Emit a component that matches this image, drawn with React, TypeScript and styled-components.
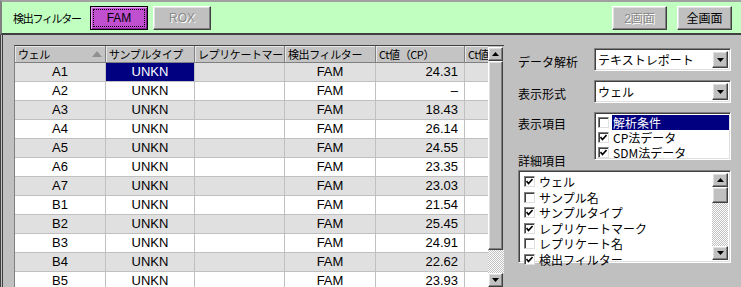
import React from 'react';
import styled, { createGlobalStyle, css } from 'styled-components';

const GlobalStyle = createGlobalStyle`
	html, body {
		margin: 0;
		padding: 0;
		background: #c0c0c0;
	}
	body {
		font-family: "Liberation Sans", "Noto Sans CJK JP", sans-serif;
		font-size: 12px;
		color: #000;
	}
`;

const rows = [
	['A1', '24.31'],
	['A2', '–'],
	['A3', '18.43'],
	['A4', '26.14'],
	['A5', '24.55'],
	['A6', '23.35'],
	['A7', '23.03'],
	['B1', '21.54'],
	['B2', '25.45'],
	['B3', '24.91'],
	['B4', '22.62'],
	['B5', '23.93'],
	['B6', '24.08'],
];

const headers = ['ウェル', 'サンプルタイプ', 'レプリケートマーク', '検出フィルター', 'Ct値（CP）', 'Ct値（SDM）'];

const displayItems = [
	{ label: '解析条件', checked: false, selected: true },
	{ label: 'CP法データ', checked: true },
	{ label: 'SDM法データ', checked: true },
];

const detailItems = [
	{ label: 'ウェル', checked: true },
	{ label: 'サンプル名', checked: false },
	{ label: 'サンプルタイプ', checked: true },
	{ label: 'レプリケートマーク', checked: true },
	{ label: 'レプリケート名', checked: false },
	{ label: '検出フィルター', checked: true },
];

const Arrow = ({ down }: { down?: boolean }) => (
	<svg width="7" height="4" viewBox="0 0 7 4">
		<polygon points={down ? '0,0 7,0 3.5,4' : '0,4 7,4 3.5,0'} fill="#000" />
	</svg>
);

const Check = () => (
	<svg width="7" height="7" viewBox="0 0 7 7">
		<polyline points="0.5,3 2.5,5.5 6.5,1" fill="none" stroke="#000" strokeWidth="1.6" />
	</svg>
);

export default function App() {
	return (
		<>
			<GlobalStyle />
			<Screen>
				<TopBar>
					<FilterLabel>検出フィルター</FilterLabel>
					<FilterButton active>
						<Focus>FAM</Focus>
					</FilterButton>
					<FilterButton disabled>ROX</FilterButton>
					<Spacer />
					<ViewButton disabled>2画面</ViewButton>
					<ViewButton>全画面</ViewButton>
				</TopBar>
				<Body>
					<TableArea>
						<TableClip>
							<Grid>
								{headers.map((h, i) => (
									<HeaderCell key={h}>
										{h}
										{i === 0 && <SortMark />}
									</HeaderCell>
								))}
								{rows.map(([well, ct], r) => (
									<React.Fragment key={well}>
										<Cell odd={r % 2 === 0}>{well}</Cell>
										<Cell odd={r % 2 === 0} selected={r === 0}>UNKN</Cell>
										<Cell odd={r % 2 === 0} />
										<Cell odd={r % 2 === 0}>FAM</Cell>
										<Cell odd={r % 2 === 0} right>{ct}</Cell>
										<Cell odd={r % 2 === 0} />
									</React.Fragment>
								))}
							</Grid>
						</TableClip>
						<VScroll>
							<ScrollBtn><Arrow /></ScrollBtn>
							<Thumb />
							<Track />
							<ScrollBtn><Arrow down /></ScrollBtn>
						</VScroll>
					</TableArea>
					<Side>
						<FieldRow>
							<FieldLabel>データ解析</FieldLabel>
							<Select>
								<SelectText>テキストレポート</SelectText>
								<DropBtn><Arrow down /></DropBtn>
							</Select>
						</FieldRow>
						<FieldRow>
							<FieldLabel>表示形式</FieldLabel>
							<Select>
								<SelectText>ウェル</SelectText>
								<DropBtn><Arrow down /></DropBtn>
							</Select>
						</FieldRow>
						<FieldRow top>
							<FieldLabel>表示項目</FieldLabel>
							<ListBox>
								{displayItems.map(it => (
									<ListItem key={it.label}>
										<Box>{it.checked && <Check />}</Box>
										<ItemText selected={it.selected}>{it.label}</ItemText>
									</ListItem>
								))}
							</ListBox>
						</FieldRow>
						<DetailLabel>詳細項目</DetailLabel>
						<DetailList>
							<DetailItems>
								{detailItems.map(it => (
									<ListItem key={it.label} tall>
										<Box>{it.checked && <Check />}</Box>
										<ItemText>{it.label}</ItemText>
									</ListItem>
								))}
							</DetailItems>
							<SmallScroll>
								<ScrollBtn small><Arrow /></ScrollBtn>
								<SmallThumb />
								<Track />
								<ScrollBtn small><Arrow down /></ScrollBtn>
							</SmallScroll>
						</DetailList>
					</Side>
				</Body>
			</Screen>
		</>
	);
}

const raised = css`
	border: 1px solid;
	border-color: #fff #404040 #404040 #fff;
	box-shadow: inset -1px -1px 0 #808080, inset 1px 1px 0 #dfdfdf;
`;

const sunken = css`
	border: 1px solid;
	border-color: #808080 #fff #fff #808080;
	box-shadow: inset 1px 1px 0 #404040, inset -1px -1px 0 #dfdfdf;
`;

const Screen = styled.div`
	width: 741px;
	height: 287px;
	overflow: hidden;
	background: #c0c0c0;
	display: flex;
	flex-direction: column;
`;

const TopBar = styled.div`
	height: 31px;
	flex: none;
	display: flex;
	align-items: center;
	gap: 5px;
	padding: 0 9px 0 11px;
	background: #c0ffc0;
	border-top: 2px solid #a0a0a0;
	border-left: 2px solid #808080;
	border-bottom: 2px solid #404040;
`;

const FilterLabel = styled.span`
	width: 72px;
	white-space: nowrap;
	font-family: "Noto Sans CJK JP", sans-serif;
	font-size: 11px;
	letter-spacing: -1.3px;
`;

const FilterButton = styled.div<{ active?: boolean; disabled?: boolean }>`
	width: 58px;
	height: 24px;
	box-sizing: border-box;
	display: flex;
	align-items: center;
	justify-content: center;
	${props =>
		props.active
			? css`
					background: #c050d0;
					border: 1px solid #000;
					box-shadow: inset 1px 1px 0 #e8a0f0, inset -1px -1px 0 #802090;
			  `
			: css`
					background: #c0c0c0;
					${raised};
			  `}
	color: ${props => (props.disabled ? '#8a8a8a' : '#000')};
	text-shadow: ${props => (props.disabled ? '1px 1px 0 #fff' : 'none')};
`;

const Focus = styled.span`
	display: flex;
	align-items: center;
	justify-content: center;
	width: 52px;
	height: 18px;
	box-sizing: border-box;
	border: 1px dotted #000;
`;

const Spacer = styled.div`
	flex: 1;
`;

const ViewButton = styled.div<{ disabled?: boolean }>`
	width: 55px;
	height: 24px;
	box-sizing: border-box;
	display: flex;
	align-items: center;
	justify-content: center;
	background: #c0c0c0;
	${raised};
	margin-left: 5px;
	color: ${props => (props.disabled ? '#8a8a8a' : '#000')};
	text-shadow: ${props => (props.disabled ? '1px 1px 0 #fff' : 'none')};
`;

const Body = styled.div`
	flex: 1;
	display: flex;
	border-left: 3px double #404040;
	min-height: 0;
`;

const TableArea = styled.div`
	display: flex;
	padding: 10px 0 0 11px;
	width: 490px;
	flex: none;
`;

const TableClip = styled.div`
	width: 474px;
	overflow: hidden;
	border-top: 1px solid #404040;
	border-left: 1px solid #808080;
`;

const Grid = styled.div`
	display: grid;
	grid-template-columns: 91px 89px 90px 91px 89px 80px;
	grid-auto-rows: 19px;
	grid-template-rows: 17px;
	width: 530px;
`;

const HeaderCell = styled.div`
	position: relative;
	background: #c4c4c4;
	border-right: 1px solid #808080;
	border-bottom: 1px solid #808080;
	box-shadow: inset 1px 1px 0 #e8e8e8;
	padding: 0 3px;
	line-height: 16px;
	white-space: nowrap;
	overflow: hidden;
	font-family: "Noto Sans CJK JP", sans-serif;
	font-size: 11px;
	letter-spacing: -0.4px;
`;

const SortMark = styled.span`
	position: absolute;
	right: 3px;
	top: 5px;
	width: 0;
	height: 0;
	border-left: 5px solid transparent;
	border-right: 5px solid transparent;
	border-bottom: 6px solid #909090;
`;

const Cell = styled.div<{ odd?: boolean; selected?: boolean; right?: boolean }>`
	background: ${props => (props.selected ? '#000080' : props.odd ? '#e0e0e0' : '#fff')};
	color: ${props => (props.selected ? '#fff' : '#000')};
	border-right: 1px solid #c0c0c0;
	border-bottom: 1px solid #c0c0c0;
	text-align: ${props => (props.right ? 'right' : 'center')};
	padding: 0 ${props => (props.right ? '6px' : '0')} 0 0;
	line-height: 18px;
	font-size: 13px;
`;

const VScroll = styled.div`
	width: 16px;
	flex: none;
	display: flex;
	flex-direction: column;
	border-top: 1px solid #404040;
	background: #c0c0c0;
	padding-top: 1px;
`;

const ScrollBtn = styled.div<{ small?: boolean }>`
	width: ${props => (props.small ? '16px' : '15px')};
	height: 14px;
	box-sizing: border-box;
	flex: none;
	display: flex;
	align-items: center;
	justify-content: center;
	background: #c0c0c0;
	${raised};
`;

const Thumb = styled.div`
	width: 15px;
	height: 189px;
	box-sizing: border-box;
	flex: none;
	background: #c0c0c0;
	${raised};
`;

const Track = styled.div`
	flex: 1;
	background: repeating-conic-gradient(#fff 0 25%, #c0c0c0 0 50%) 0 0 / 2px 2px;
`;

const Side = styled.div`
	flex: 1;
	display: flex;
	flex-direction: column;
	padding: 13px 8px 0 14px;
`;

const FieldRow = styled.div<{ top?: boolean }>`
	display: flex;
	align-items: ${props => (props.top ? 'flex-start' : 'center')};
	margin-bottom: 9px;
`;

const FieldLabel = styled.div`
	width: 76px;
	font-family: "Noto Sans CJK JP", sans-serif;
	font-size: 12px;
	padding-top: 3px;
`;

const Select = styled.div`
	width: 137px;
	height: 23px;
	box-sizing: border-box;
	display: flex;
	align-items: center;
	background: #fff;
	${sunken};
	padding: 2px;
`;

const SelectText = styled.div`
	flex: 1;
	font-family: "Noto Sans CJK JP", sans-serif;
	padding-left: 1px;
`;

const DropBtn = styled.div`
	width: 16px;
	height: 17px;
	box-sizing: border-box;
	display: flex;
	align-items: center;
	justify-content: center;
	background: #c0c0c0;
	${raised};
`;

const ListBox = styled.div`
	width: 137px;
	height: 48px;
	box-sizing: border-box;
	background: #fff;
	${sunken};
	padding: 2px 1px 0 3px;
`;

const ListItem = styled.div<{ tall?: boolean }>`
	display: flex;
	align-items: center;
	gap: 3px;
	height: ${props => (props.tall ? '15.5px' : '15px')};
	font-family: "Noto Sans CJK JP", sans-serif;
	font-size: 12px;
`;

const Box = styled.div`
	width: 11px;
	height: 11px;
	box-sizing: border-box;
	flex: none;
	display: flex;
	align-items: center;
	justify-content: center;
	background: #fff;
	border: 1px solid;
	border-color: #808080 #dfdfdf #dfdfdf #808080;
	box-shadow: inset 1px 1px 0 #404040;
`;

const ItemText = styled.div<{ selected?: boolean }>`
	flex: 1;
	line-height: 15px;
	padding-left: 1px;
	background: ${props => (props.selected ? '#000080' : 'transparent')};
	color: ${props => (props.selected ? '#fff' : '#000')};
	white-space: nowrap;
`;

const DetailLabel = styled.div`
	font-family: "Noto Sans CJK JP", sans-serif;
	margin: -16px 0 1px;
	line-height: 16px;
`;

const DetailList = styled.div`
	width: 213px;
	height: 93px;
	box-sizing: border-box;
	display: flex;
	background: #fff;
	${sunken};
	padding: 2px;
`;

const DetailItems = styled.div`
	flex: 1;
	padding: 1px 0 0 3px;
`;

const SmallScroll = styled.div`
	width: 16px;
	display: flex;
	flex-direction: column;
	background: #c0c0c0;
`;

const SmallThumb = styled.div`
	height: 16px;
	box-sizing: border-box;
	flex: none;
	background: #c0c0c0;
	${raised};
`;
